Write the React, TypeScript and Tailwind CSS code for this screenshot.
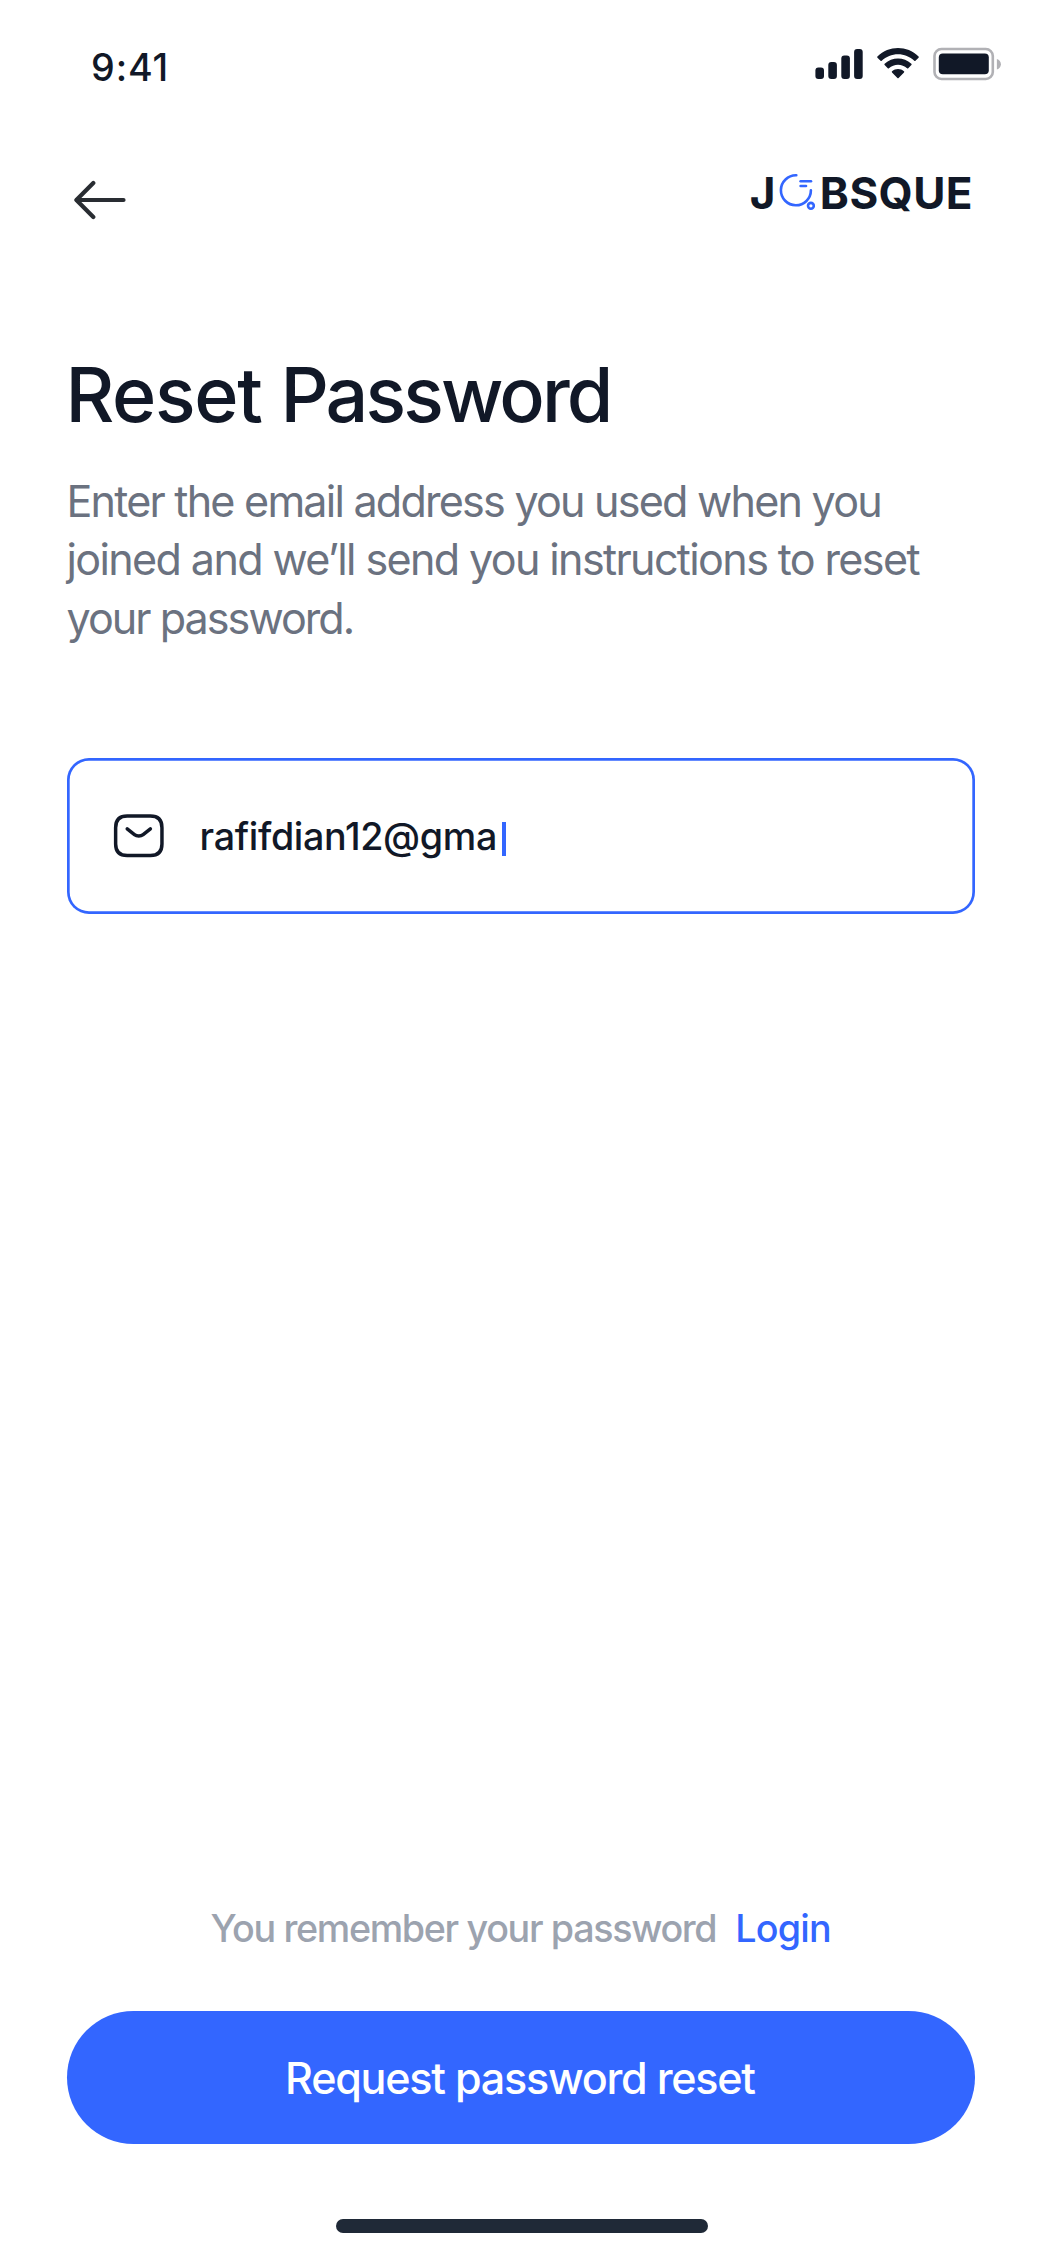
function SignalIcon() {
  return (
    <svg className="h-[34px] w-12" viewBox="0 0 48 34" fill="#111827">
      <rect x="0.4" y="20.4" width="8.6" height="11.6" rx="3" />
      <rect x="13.3" y="15" width="8.6" height="17" rx="3" />
      <rect x="26.3" y="8.4" width="8.6" height="23.6" rx="3" />
      <rect x="39.1" y="2" width="8.6" height="30" rx="3" />
    </svg>
  );
}

function WifiIcon() {
  return (
    <svg className="h-[34px] w-[42px]" viewBox="0 -0.3 15.27 12.2" fill="#111827">
      <path d="M7.63661 2.27733C9.85228 2.27742 11.9833 3.12886 13.5592 4.65566C13.6779 4.77354 13.8676 4.77205 13.9844 4.65233L15.1188 3.48488C15.178 3.42417 15.2109 3.34192 15.2103 3.25636C15.2098 3.17081 15.1758 3.08901 15.1158 3.02907C10.9346 -1.00969 4.33802 -1.00969 0.156761 3.02907C0.0967578 3.08896 0.0626985 3.17072 0.0620959 3.25628C0.0614933 3.34183 0.0943796 3.42411 0.153494 3.48488L1.28825 4.65233C1.40493 4.77223 1.59488 4.77372 1.71345 4.65566C3.28952 3.12876 5.4208 2.27732 7.63661 2.27733ZM7.63661 6.07548C8.85395 6.0754 10.0279 6.52931 10.9301 7.34896C11.0521 7.46528 11.2447 7.46276 11.3637 7.34329L12.4969 6.17584C12.5565 6.11461 12.5897 6.03153 12.5888 5.9452C12.588 5.85886 12.5533 5.77646 12.4925 5.7164C9.75631 3.11507 5.51921 3.11507 2.78302 5.7164C2.72212 5.77646 2.68738 5.8589 2.68659 5.94527C2.6858 6.03164 2.71903 6.11472 2.77882 6.17584L3.91165 7.34329C4.03062 7.46276 4.22325 7.46528 4.34524 7.34896C5.24674 6.52986 6.41978 6.07599 7.63661 6.07548ZM9.9072 8.62992C9.90893 8.7166 9.87545 8.80012 9.8147 8.86071L7.85461 10.8859C7.79715 10.9454 7.7188 10.9789 7.63703 10.9789C7.55527 10.9789 7.47691 10.9454 7.41945 10.8859L5.45904 8.86071C5.3983 8.80007 5.36493 8.71652 5.36677 8.62983C5.36861 8.54315 5.4055 8.46118 5.46872 8.4033C6.72043 7.32996 8.55364 7.32996 9.80535 8.4033C9.86852 8.46123 9.90548 8.54324 9.9072 8.62992Z" />
    </svg>
  );
}

function BatteryIcon() {
  return (
    <svg className="h-[34px] w-[69px]" viewBox="0 0 69 34">
      <rect x="1.5" y="2" width="58.3" height="30" rx="7" fill="none" stroke="#b1b1b5" strokeWidth="2.6" />
      <rect x="5.8" y="6.5" width="50" height="20.8" rx="4" fill="#111827" />
      <path d="M63.9 12v10.6c2.4-.9 4-2.9 4-5.3s-1.6-4.4-4-5.3z" fill="#b1b1b5" />
    </svg>
  );
}

function BackArrow() {
  return (
    <svg
      className="h-10 w-[52px]"
      viewBox="0 0 52 40"
      fill="none"
      stroke="#292d32"
      strokeWidth="4.2"
      strokeLinecap="round"
      strokeLinejoin="round"
    >
      <path d="M19.3 3.1L2.4 20L19.3 36.9" />
      <path d="M49.5 20H3" />
    </svg>
  );
}

function LogoMark() {
  return (
    <svg
      className="h-12 w-9"
      viewBox="0 0 36 48"
      fill="none"
      stroke="#3366ff"
      strokeWidth="2.6"
      strokeLinecap="round"
    >
      <path d="M17.3 6.3A15 15 0 1 0 31.9 21.3" />
      <path d="M21.6 12.3H32" />
      <path d="M21.6 17H27" />
      <circle cx="31.9" cy="36.8" r="2.9" />
    </svg>
  );
}

function MailIcon() {
  return (
    <svg
      className="h-[55.6px] w-[55.6px]"
      viewBox="0 0 24 24"
      fill="none"
      stroke="#111827"
      strokeWidth="1.5"
      strokeLinecap="round"
      strokeLinejoin="round"
    >
      <path d="M17 20.5H7C4 20.5 2 19 2 15.5V8.5C2 5 4 3.5 7 3.5H17C20 3.5 22 5 22 8.5V15.5C22 19 20 20.5 17 20.5Z" />
      <path d="M17 9L13.87 11.5C12.84 12.32 11.15 12.32 10.12 11.5L7 9" />
    </svg>
  );
}

export default function App() {
  return (
    <div className="flex h-[2256px] w-[1042px] flex-col overflow-hidden bg-white font-['Inter',sans-serif] text-[#111827]">
      <div className="flex h-[122px] items-start justify-between pt-[47px] pr-10 pl-[91px]">
        <span className="text-[37.7px] leading-10 font-medium tracking-[0.9px]">9:41</span>
        <div className="flex gap-3.5">
          <SignalIcon />
          <WifiIcon />
          <BatteryIcon />
        </div>
      </div>

      <header className="flex h-[228px] items-start justify-between pt-[46.7px] pr-[69px] pl-[74px]">
        <button className="pt-[11.3px]" aria-label="Back">
          <BackArrow />
        </button>
        <div className="flex text-[44px] leading-12 font-bold">
          <span>J</span>
          <span className="mr-[4.5px] ml-1">
            <LogoMark />
          </span>
          <span className="tracking-[0.42px]">BSQUE</span>
        </div>
      </header>

      <main className="flex flex-1 flex-col pr-[67.2px] pl-[66.5px]">
        <h1 className="-ml-px text-[75.4px] leading-[90px] font-medium">
          <span className="tracking-[-1.3px]">Reset </span>
          <span className="tracking-[-2.9px]">Password</span>
        </h1>
        <p className="mt-8 text-[43.1px] leading-[58.35px] whitespace-nowrap text-[#6b7280]">
          <span className="block tracking-[-1.78px]">Enter the email address you used when you</span>
          <span className="block tracking-[-1.64px]">joined and we’ll send you instructions to reset</span>
          <span className="block tracking-[-1.96px]">your password.</span>
        </p>

        <div className="mt-[111.3px] flex h-[155.5px] items-center rounded-[22px] pl-[44.5px] shadow-[inset_0_0_0_2.7px_#3366ff]">
          <MailIcon />
          <span className="ml-[33px] text-[37.7px] leading-12 font-medium tracking-[-0.34px]">rafifdian12@gma</span>
          <span className="mt-1.5 ml-[5px] h-[33.5px] w-1 bg-[#3366ff]" />
        </div>

        <div className="mt-auto flex justify-center gap-[19px] text-[37.7px] leading-[50px] font-medium">
          <span className="tracking-[-1.34px] text-[#9ca3af]">You remember your password</span>
          <a className="tracking-[-0.8px] text-[#3366ff]">Login</a>
        </div>
        <button className="mt-[58px] h-[133.4px] rounded-full bg-[#3366ff] pr-[1.5px] text-[43.1px] leading-[58px] font-medium tracking-[-1.25px] text-white">
          Request password reset
        </button>
      </main>

      <div className="flex h-[111.7px] justify-center pt-[74.8px] pl-[2px]">
        <div className="h-3.5 w-[372px] rounded-full bg-[#1f2937]" />
      </div>
    </div>
  );
}
